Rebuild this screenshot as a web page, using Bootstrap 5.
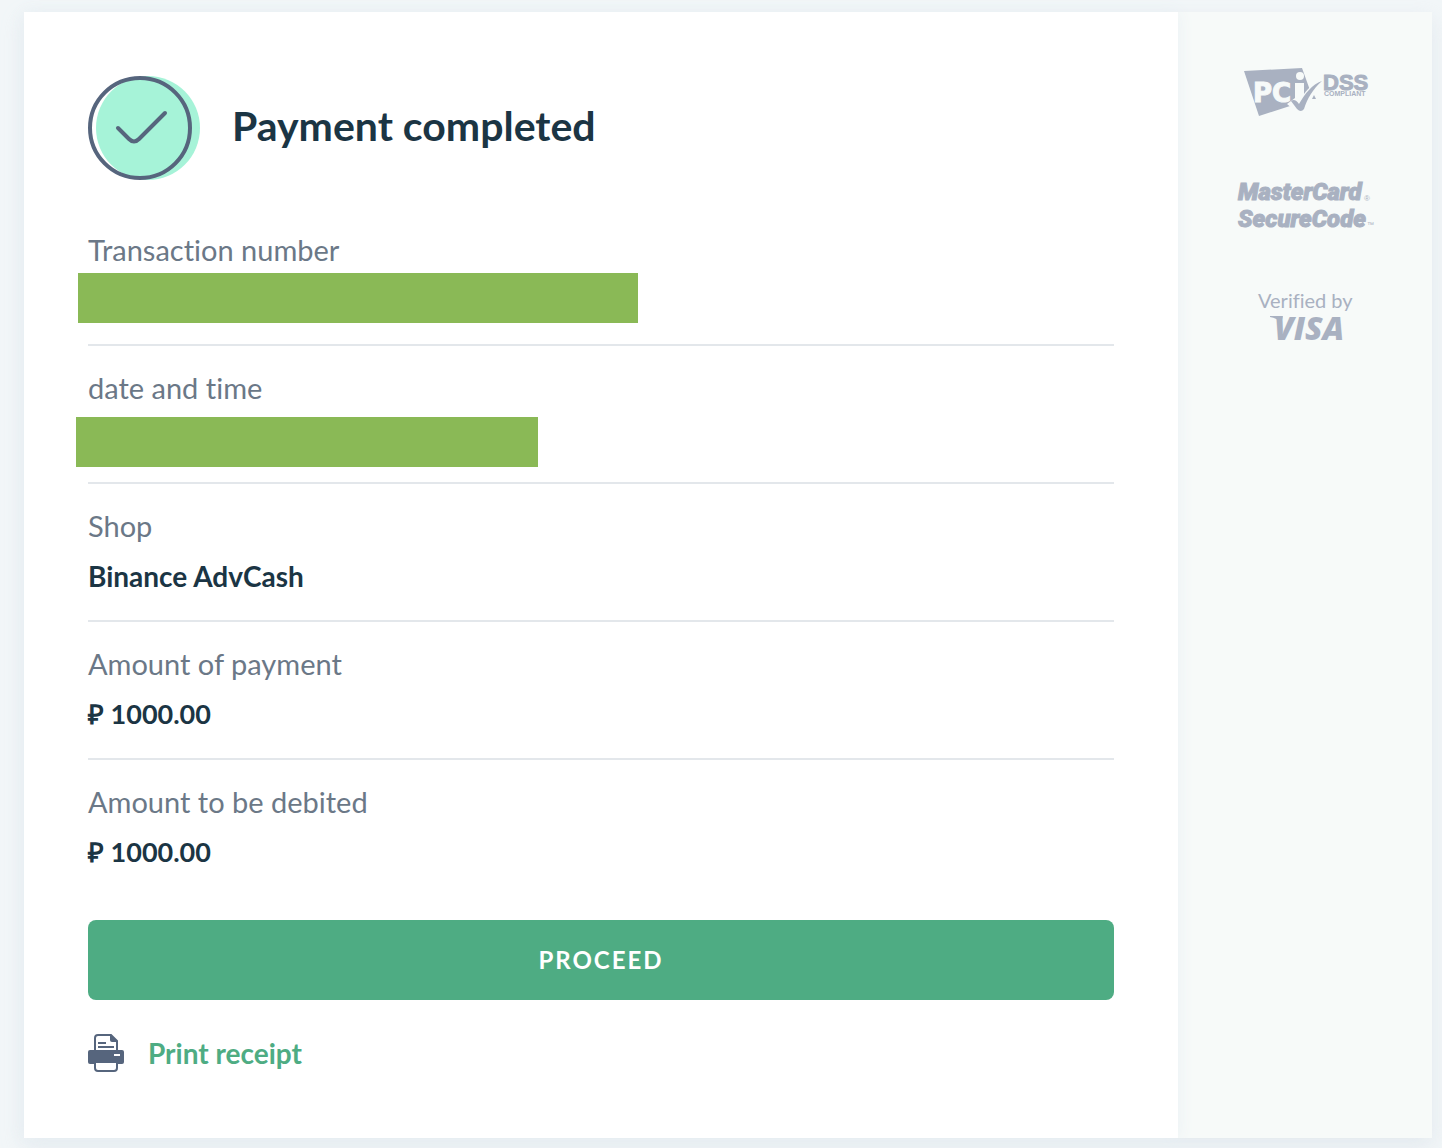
<!DOCTYPE html>
<html lang="en">
<head>
<meta charset="utf-8">
<meta name="viewport" content="width=device-width, initial-scale=1">
<title>Payment completed</title>
<link href="https://cdn.jsdelivr.net/npm/bootstrap@5.3.0/dist/css/bootstrap.min.css" rel="stylesheet">
<style>
body { background: #f2f6f8; color: #1b3544; font-family: Lato, "Open Sans", sans-serif; font-size: 28px; line-height: 36px; font-variant-ligatures: none; }
.pay-shell { padding: 12px 10px 10px 24px; }
.pay-frame { background: #f7faf9; box-shadow: 0 8px 20px rgba(205, 214, 226, .4); }
.pay-main { background: #fff; padding: 64px 64px 59px; box-shadow: 0 0 16px #e9f0f4; }
.pay-side { width: 254px; padding-top: 48px; gap: 32px; }
.pay-head { gap: 32px; margin-bottom: 28px; }
.pay-title { font-size: 41px; line-height: 48px; font-weight: 700; padding-bottom: 4px; }
.pay-row { height: 138px; padding-top: 24px; border-bottom: 2px solid #e3e7eb; }
.pay-row:last-child { border-bottom: 0; }
.pay-label { color: #6b7887; font-size: 29px; font-weight: 400; }
.pay-value { font-weight: 700; margin: 14px 0 0; }
.pay-amount { font-size: 27px; }
.pay-cover { height: 50px; background: #8ab956; }
.cover-number { width: 560px; margin: 5px 0 0 -10px; }
.cover-date { width: 462px; margin: 11px 0 0 -12px; }
.pay-btn { height: 80px; margin-top: 22px; border-radius: 8px; border: 0; background: #4eac83; color: #fff; font-size: 24px; font-weight: 700; letter-spacing: 2px; }
.pay-btn:hover { background: #43996f; color: #fff; }
.pay-print { margin-top: 34px; gap: 24px; color: #4eac83; font-weight: 700; }
.logo-ink { fill: #a9b1c1; }
.card-face { font: italic 900 24px Roboto, "Liberation Sans", sans-serif; }
</style>
<script src="https://cdn.jsdelivr.net/npm/bootstrap@5.3.0/dist/js/bootstrap.bundle.min.js" defer></script>
</head>
<body>
<div class="pay-shell">
  <div class="pay-frame d-flex">
    <main class="pay-main flex-grow-1">
      <header class="pay-head d-flex align-items-center">
        <svg width="112" height="104" viewBox="0 0 112 104" aria-hidden="true">
          <circle cx="60" cy="52" r="52" fill="#a6f3d8"/>
          <circle cx="52" cy="52" r="50" fill="none" stroke="#56657d" stroke-width="4"/>
          <path d="M30 52L41 63Q46 68 51 63L77 37" fill="none" stroke="#56657d" stroke-width="4" stroke-linecap="round"/>
        </svg>
        <h1 class="pay-title mb-0">Payment completed</h1>
      </header>
      <dl class="mb-0">
        <div class="pay-row"><dt class="pay-label">Transaction number</dt><dd class="pay-cover cover-number"></dd></div>
        <div class="pay-row"><dt class="pay-label">date and time</dt><dd class="pay-cover cover-date"></dd></div>
        <div class="pay-row"><dt class="pay-label">Shop</dt><dd class="pay-value">Binance AdvCash</dd></div>
        <div class="pay-row"><dt class="pay-label">Amount of payment</dt><dd class="pay-value pay-amount">₽ 1000.00</dd></div>
        <div class="pay-row"><dt class="pay-label">Amount to be debited</dt><dd class="pay-value pay-amount">₽ 1000.00</dd></div>
      </dl>
      <button type="button" class="btn pay-btn w-100">PROCEED</button>
      <a href="#" class="pay-print d-inline-flex align-items-center text-decoration-none">
        <svg width="36" height="38" viewBox="0 0 36 38" aria-hidden="true">
          <path d="M7 18V4Q7 1 10 1H23L29 7V18" fill="#fff" stroke="#56657d" stroke-width="2"/>
          <path d="M22 0L30 8H24Q22 8 22 6Z" fill="#56657d"/>
          <path d="M10 9H18M10 13H26" stroke="#56657d" stroke-width="2"/>
          <rect y="16" width="36" height="14" rx="2" fill="#56657d"/>
          <path d="M26 21H32" stroke="#fff" stroke-width="2"/>
          <path d="M7 28H29V34Q29 37 26 37H10Q7 37 7 34Z" fill="#fff" stroke="#56657d" stroke-width="2"/>
        </svg>
        <span>Print receipt</span>
      </a>
    </main>
    <aside class="pay-side flex-shrink-0 d-flex flex-column align-items-center">
      <svg class="logo-ink" width="140" height="80" viewBox="0 0 140 80" role="img" aria-label="PCI DSS Compliant">
        <path d="M9 11L67 8L76 33L66 50L55 46L24 56Z"/>
        <text x="18" y="42" fill="#f7faf9" stroke="#f7faf9" font-family="DejaVu Sans" font-weight="700" font-size="26">PC</text>
        <circle cx="65" cy="16" r="4" fill="#f7faf9"/>
        <path d="M60 23H69V34C74 27 80 22 88 19V23L72 50L65 55L52 44L60 38Z" fill="#f7faf9"/>
        <path d="M56 41Q60 38 64 44C70 34 77 24 87 21C78 29 72 39 69 49Q66 53 62 49Z"/>
        <path d="M79 35L81 39L77 39Z"/>
        <text x="88" y="30" font-family="Liberation Sans" font-weight="700" font-size="22" stroke="#a9b1c1">DSS</text>
        <text x="89" y="36" font-family="Liberation Sans" font-weight="700" font-size="7">COMPLIANT</text>
      </svg>
      <svg class="logo-ink" width="140" height="80" viewBox="0 0 140 80" role="img" aria-label="MasterCard SecureCode">
        <text class="card-face" x="3" y="28" stroke="#a9b1c1">MasterCard</text>
        <text x="129" y="29" font-family="Liberation Sans" font-size="8">®</text>
        <text class="card-face" x="3" y="55" stroke="#a9b1c1">SecureCode</text>
        <text x="132" y="55" font-family="Liberation Sans" font-size="7">™</text>
      </svg>
      <svg class="logo-ink" width="140" height="80" viewBox="0 0 140 80" role="img" aria-label="Verified by Visa">
        <text x="23" y="24" font-family="Lato" font-size="20">Verified by</text>
        <path d="M35 32H48L46 39Q42 34 35 33Z"/>
        <text x="39" y="56" font-family="Open Sans" font-weight="800" font-style="italic" font-size="32">VISA</text>
      </svg>
    </aside>
  </div>
</div>
</body>
</html>
